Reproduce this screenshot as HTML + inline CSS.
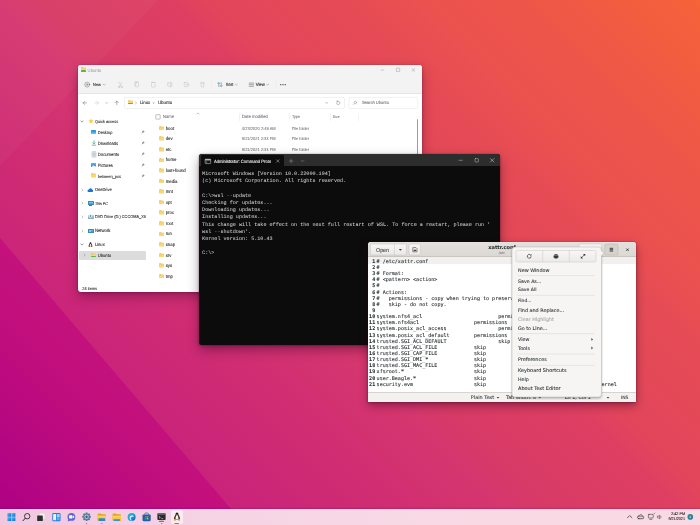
<!DOCTYPE html>
<html lang="en"><head><meta charset="utf-8"><title>Desktop</title>
<style>
html,body{margin:0;padding:0;background:#c9177a;}
body{width:700px;height:525px;overflow:hidden;}
#desk{position:relative;width:700px;height:525px;overflow:hidden;filter:blur(0.3px);
 background:linear-gradient(45deg,
  rgb(186,10,127) 0%,
  rgb(198,30,123) 12%,
  rgb(202,37,121) 22.9%,
  rgb(207,44,115) 31.9%,
  rgb(214,55,110) 42.9%,
  rgb(215,58,102) 46.2%,
  rgb(222,63,98) 56.7%,
  rgb(226,69,91) 59.8%,
  rgb(229,75,85) 70.9%,
  rgb(236,82,78) 78.1%,
  rgb(238,85,73) 85.2%,
  rgb(245,98,58) 98.9%,
  rgb(246,100,56) 100%);}
#desk div,#desk span,#desk svg{position:absolute;box-sizing:border-box;}
svg.tx{pointer-events:none;}
svg.tx text{white-space:pre;text-rendering:geometricPrecision;stroke-linejoin:round;}
.s{font-family:"Liberation Sans",sans-serif;}
.m{font-family:"Liberation Mono",monospace;}
.ds{font-family:"DejaVu Sans","Liberation Sans",sans-serif;}
.dm{font-family:"DejaVu Sans Mono","Liberation Mono",monospace;}

</style></head>
<body>
<div id="desk">
<svg width="700" height="525" viewBox="0 0 700 525" style="left:0;top:0"><defs><linearGradient id="g1" gradientUnits="userSpaceOnUse" x1="0" y1="525" x2="230" y2="295"><stop offset="0" stop-color="rgb(172,0,133)"/><stop offset="0.45" stop-color="rgb(193,14,125)"/><stop offset="1" stop-color="rgb(203,26,121)"/></linearGradient></defs><polygon points="0,238 232,510 232,525 0,525" fill="url(#g1)"/><polygon points="0,0 158,0 0,166" fill="#fff" opacity=".03"/></svg>
<div class="win" style="left:78.00px;top:65.00px;width:343.50px;height:227.00px;background:#fff;border-radius:3px;box-shadow:0 5px 12px rgba(50,0,40,.34),0 1px 3px rgba(50,0,40,.25),0 0 1px rgba(0,0,0,.35);overflow:hidden;"></div>
<div style="left:78.00px;top:65.00px;width:343.50px;height:29.00px;background:#f3f3f3;border-radius:3px 3px 0 0;border-bottom:0.5px solid #e5e5e5;"></div>
<svg width="5.60" height="4.48" viewBox="0 0 20 16" style="left:80.60px;top:67.40px"><path d="M1 2.2C1 1.5 1.5 1 2.2 1H7l2 2h8.8c.7 0 1.2.5 1.2 1.2V14c0 .6-.5 1-1.2 1H2.2C1.5 15 1 14.600 1 14Z" fill="#eab640"/><path d="M1 5.200C1 4.600 1.500 4.200 2.200 4.200H17.800C18.500 4.200 19 4.600 19 5.200V14c0 .6-.5 1-1.200 1H2.200C1.500 15 1 14.600 1 14Z" fill="#f8d874"/></svg>
<div style="left:81.2px;top:70.2px;width:4.4px;height:1.5px;background:#59b648;border-radius:.4px"></div>
<svg width="40" height="8" viewBox="0 0 40 8" style="left:378px;top:65.8px" fill="none" stroke="#989898" stroke-width=".48"><path d="M2.8 4H6.200"/><rect x="18.3" y="2.2" width="3.4" height="3.4" rx=".5"/><path d="M33.6 2.300l3.400 3.400M37 2.300l-3.400 3.400"/></svg>
<svg width="345" height="20" viewBox="78 74 345 20" style="left:78px;top:74px" fill="none" stroke-linecap="round"><circle cx="87.2" cy="84.6" r="2.500" stroke="#555" stroke-width=".4"/><path d="M87.2 83.400v2.400M86 84.600h2.400" stroke="#555" stroke-width=".4"/><path d="M103.2 84.200l1 1 1-1" stroke="#777" stroke-width=".45"/><g stroke="#c2c2c2" stroke-width=".5"><path d="M118.800 82l2.800 4.600M122 82l-2.800 4.600"/><circle cx="119" cy="87" r=".8"/><circle cx="121.800" cy="87" r=".8"/><rect x="135.600" y="82.600" width="3" height="4.200" rx=".5"/><path d="M134.800 86V82.400c0-.4.300-.7.700-.7h2.300"/><rect x="151.500" y="82.400" width="3.800" height="4.600" rx=".5"/><path d="M152.600 82.400h1.600"/><rect x="167.600" y="83" width="4.400" height="3.200" rx=".5"/><path d="M170.800 82v5.200"/><rect x="184.200" y="82.600" width="4" height="4" rx=".5"/><path d="M186.200 84.600h2.800"/><path d="M200.400 83h4M201 83l.3 4h2.200l.3-4M201.800 82.300h1.200"/></g><path d="M211.500 80.500v8" stroke="#e9e9e9" stroke-width=".4"/><g stroke="#3f7d9f" stroke-width=".55"><path d="M218.800 82.600v4M217.700 83.700l1.100-1.100 1.100 1.100M221.200 86.600v-4M220.100 85.500l1.100 1.100 1.100-1.100"/></g><path d="M235.400 84.200l1 1 1-1" stroke="#777" stroke-width=".45"/><g stroke="#9a9a9a" stroke-width=".9"><path d="M249.200 83.100h4.400M249.200 84.700h4.400M249.200 86.300h4.400"/></g><path d="M266.700 84.200l1 1 1-1" stroke="#777" stroke-width=".45"/><path d="M276 80.500v8" stroke="#e9e9e9" stroke-width=".4"/><g fill="#2e2e2e" stroke="none"><circle cx="280.800" cy="84.700" r=".6"/><circle cx="283" cy="84.700" r=".6"/><circle cx="285.200" cy="84.700" r=".6"/></g></svg>
<svg width="345" height="17" viewBox="78 94 345 17" style="left:78px;top:94px" fill="none" stroke-linecap="round" stroke-linejoin="round"><path d="M86.600 102.900h-3.600M84.600 101.300l-1.600 1.600 1.600 1.600" stroke="#6a6a6a" stroke-width=".5"/><path d="M94.900 102.900h3.600M96.900 101.300l1.600 1.600-1.600 1.600" stroke="#c4c4c4" stroke-width=".5"/><path d="M105.900 102.500l.9.900.9-.9" stroke="#777" stroke-width=".45"/><path d="M116.800 104.700v-3.600M115.200 102.700l1.600-1.600 1.600 1.600" stroke="#6a6a6a" stroke-width=".5"/><rect x="124.500" y="97.400" width="220" height="11.100" rx="1.200" fill="#fff" stroke="#e3e3e3" stroke-width=".5"/><path d="M135.600 102l.9.900-.9.900M153.300 102l.9.900-.9.900" stroke="#666" stroke-width=".45"/><path d="M325.900 102.600l.8.800.8-.8" stroke="#5a5a5a" stroke-width=".45"/><path d="M336.500 102.900a1.700 1.700 0 1 0 .5-1.200M337 100.700v1.100h1.100" stroke="#6e6e6e" stroke-width=".42"/><rect x="349" y="97.400" width="68.600" height="11.100" rx="1.200" fill="#fff" stroke="#e3e3e3" stroke-width=".5"/><circle cx="355.200" cy="102.500" r="1.300" stroke="#8a8a8a" stroke-width=".45"/><path d="M354.300 103.500l-1 1.100" stroke="#8a8a8a" stroke-width=".45"/></svg>
<svg width="5.40" height="4.32" viewBox="0 0 20 16" style="left:127.80px;top:100.40px"><path d="M1 2.2C1 1.5 1.5 1 2.2 1H7l2 2h8.8c.7 0 1.2.5 1.2 1.2V14c0 .6-.5 1-1.2 1H2.2C1.5 15 1 14.600 1 14Z" fill="#eab640"/><path d="M1 5.200C1 4.600 1.500 4.200 2.200 4.200H17.800C18.500 4.200 19 4.600 19 5.200V14c0 .6-.5 1-1.200 1H2.200C1.500 15 1 14.600 1 14Z" fill="#f8d874"/></svg>
<div style="left:128.400px;top:103.100px;width:4.200px;height:1.400px;background:#59b648;border-radius:.4px"></div>
<div style="left:79.00px;top:250.70px;width:67.00px;height:9.00px;background:#dcdcdc;border-radius:1px;"></div>
<svg width="4" height="3" viewBox="0 0 4 3" style="left:80.00px;top:119.80px" fill="none" stroke="#555" stroke-width=".6" stroke-linecap="round"><path d="M.800 .900l1.200 1.200 1.200-1.200"/></svg>
<svg width="6" height="6" viewBox="0 0 24 24" style="left:87.700px;top:118.300px"><path d="M12 2l3.100 6.500 7 .9-5.100 4.900 1.300 7L12 17.900 5.700 21.300l1.300-7L1.900 9.400l7-.9Z" fill="#f7c948"/></svg>
<div style="left:90.60px;top:129.90px;width:5.80px;height:4.40px;background:linear-gradient(#2f8fd6 0%,#38a5dd 62%,#7fd0ee 64%,#5bbbe6 100%);border-radius:.6px;"></div>
<svg width="4" height="4" viewBox="0 0 4 4" style="left:141.00px;top:130.10px" fill="#8a8a8a" stroke="#8a8a8a" stroke-width=".35"><path d="M2.300.600l1.100 1.100-.8.300-.7.900-.9-.9.900-.7Z"/><path d="M1.400 2.600l-.9.900" fill="none"/></svg>
<svg width="6" height="6" viewBox="0 0 6 6" style="left:90.500px;top:140.400px" fill="none" stroke="#2a9d8f" stroke-width=".65" stroke-linecap="round"><path d="M3 .800v3M1.800 2.700l1.200 1.200 1.200-1.200"/><path d="M1.200 5.200h3.600" stroke="#3f8f9f"/></svg>
<svg width="4" height="4" viewBox="0 0 4 4" style="left:141.00px;top:141.20px" fill="#8a8a8a" stroke="#8a8a8a" stroke-width=".35"><path d="M2.300.600l1.100 1.100-.8.300-.7.900-.9-.9.900-.7Z"/><path d="M1.400 2.600l-.9.900" fill="none"/></svg>
<svg width="6" height="7" viewBox="0 0 6 7" style="left:90.500px;top:150.700px"><rect x=".9" y=".6" width="4.200" height="5.600" rx=".5" fill="#e3e8ee" stroke="#a3afbc" stroke-width=".4"/><path d="M1.700 2.200h2.600M1.700 3.300h2.600M1.700 4.400h2.600" stroke="#7d9cc0" stroke-width=".4"/></svg>
<svg width="4" height="4" viewBox="0 0 4 4" style="left:141.00px;top:152.00px" fill="#8a8a8a" stroke="#8a8a8a" stroke-width=".35"><path d="M2.300.600l1.100 1.100-.8.300-.7.900-.9-.9.900-.7Z"/><path d="M1.400 2.600l-.9.900" fill="none"/></svg>
<div style="left:90.60px;top:162.70px;width:5.80px;height:4.60px;background:linear-gradient(#5cb4f0,#2b7fd0);border-radius:.6px;"></div>
<svg width="5.800" height="4.600" viewBox="0 0 58 46" style="left:90.600px;top:162.700px"><path d="M6 40l16-20 10 12 8-8 12 16Z" fill="#dff0ff"/></svg>
<svg width="4" height="4" viewBox="0 0 4 4" style="left:141.00px;top:163.00px" fill="#8a8a8a" stroke="#8a8a8a" stroke-width=".35"><path d="M2.300.600l1.100 1.100-.8.300-.7.900-.9-.9.900-.7Z"/><path d="M1.400 2.600l-.9.900" fill="none"/></svg>
<svg width="5.60" height="4.48" viewBox="0 0 20 16" style="left:90.60px;top:173.40px"><path d="M1 2.2C1 1.5 1.5 1 2.2 1H7l2 2h8.8c.7 0 1.2.5 1.2 1.2V14c0 .6-.5 1-1.2 1H2.2C1.5 15 1 14.600 1 14Z" fill="#eab640"/><path d="M1 5.200C1 4.600 1.500 4.200 2.200 4.200H17.800C18.500 4.200 19 4.600 19 5.200V14c0 .6-.5 1-1.200 1H2.200C1.500 15 1 14.600 1 14Z" fill="#f8d874"/></svg>
<svg width="4" height="4" viewBox="0 0 4 4" style="left:141.00px;top:173.70px" fill="#8a8a8a" stroke="#8a8a8a" stroke-width=".35"><path d="M2.300.600l1.100 1.100-.8.300-.7.900-.9-.9.900-.7Z"/><path d="M1.400 2.600l-.9.900" fill="none"/></svg>
<svg width="3" height="4" viewBox="0 0 3 4" style="left:80.80px;top:187.80px" fill="none" stroke="#8a8a8a" stroke-width=".5" stroke-linecap="round"><path d="M1 .900l1.100 1.100-1.100 1.100"/></svg>
<svg width="6.400" height="4.200" viewBox="0 0 32 21" style="left:87.400px;top:187.700px"><path d="M8 20h17a6 6 0 0 0 1-11.900A8 8 0 0 0 11 6a6 6 0 0 0-5 2.500A6 6 0 0 0 8 20Z" fill="#1876d2"/></svg>
<svg width="3" height="4" viewBox="0 0 3 4" style="left:80.80px;top:201.20px" fill="none" stroke="#8a8a8a" stroke-width=".5" stroke-linecap="round"><path d="M1 .900l1.100 1.100-1.100 1.100"/></svg>
<div style="left:87.60px;top:200.90px;width:6.00px;height:4.20px;background:linear-gradient(#7fcdf0,#3fa2da);border-radius:.5px;border:.35px solid #3f86b3;"></div>
<div style="left:89.20px;top:205.10px;width:2.80px;height:0.50px;background:#5b6b78;"></div>
<svg width="3" height="4" viewBox="0 0 3 4" style="left:80.80px;top:215.00px" fill="none" stroke="#8a8a8a" stroke-width=".5" stroke-linecap="round"><path d="M1 .900l1.100 1.100-1.100 1.100"/></svg>
<div style="left:87.60px;top:215.20px;width:6.00px;height:3.60px;background:linear-gradient(#c9d3da,#8fa1ad);border-radius:.6px;"></div>
<div style="left:89.100px;top:214.400px;width:3.400px;height:3.400px;border-radius:50%;background:#39b0c7;border:.4px solid #e9f4f7"></div>
<svg width="3" height="4" viewBox="0 0 3 4" style="left:80.80px;top:228.70px" fill="none" stroke="#8a8a8a" stroke-width=".5" stroke-linecap="round"><path d="M1 .900l1.100 1.100-1.100 1.100"/></svg>
<div style="left:87.60px;top:228.50px;width:6.00px;height:4.20px;background:linear-gradient(#6fc1ee,#3292d6);border-radius:.5px;border:.35px solid #3f86b3;"></div>
<div style="left:88.600px;top:229.500px;width:2.600px;height:2.600px;border-radius:50%;background:#8fd3f7"></div>
<svg width="4" height="3" viewBox="0 0 4 3" style="left:80.30px;top:243.10px" fill="none" stroke="#555" stroke-width=".6" stroke-linecap="round"><path d="M.800 .900l1.200 1.200 1.200-1.200"/></svg>
<svg width="5.00" height="5.75" viewBox="0 0 20 23" style="left:88.20px;top:241.60px"><path d="M10 1c-2.200 0-3.400 1.800-3.400 4 0 2-1.200 3.600-2.600 6.200C2.600 14 2.400 17 3.400 19.500h13.200c1-2.500.8-5.500-.6-8.300C14.600 8.600 13.400 7 13.400 5c0-2.200-1.200-4-3.400-4Z" fill="#1c1c1c"/><path d="M10 7.500c-1.600 0-2.600 2.600-3.400 5.200-.7 2.400-.5 4.700.4 6.300h6c.9-1.600 1.100-3.900.4-6.300C12.600 10.100 11.600 7.500 10 7.500Z" fill="#f4f4f4"/><path d="M8.200 5.800l1.800 1.400 1.800-1.400-1.800-.8Z" fill="#f5a623"/><path d="M2 19.500c0-1.400 1.400-2.400 3.200-2 1.600.4 2.600 1.600 2.600 2.800C7.800 21.600 6 22 4.400 22 2.800 22 2 20.900 2 19.500ZM18 19.500c0-1.400-1.400-2.400-3.200-2-1.600.4-2.600 1.600-2.600 2.800 0 1.300 1.800 1.700 3.400 1.700 1.600 0 2.400-1.100 2.400-2.500Z" fill="#f5a623"/></svg>
<svg width="3" height="4" viewBox="0 0 3 4" style="left:83.40px;top:253.10px" fill="none" stroke="#8a8a8a" stroke-width=".5" stroke-linecap="round"><path d="M1 .900l1.100 1.100-1.100 1.100"/></svg>
<svg width="5.60" height="4.48" viewBox="0 0 20 16" style="left:90.60px;top:252.80px"><path d="M1 2.2C1 1.5 1.5 1 2.2 1H7l2 2h8.8c.7 0 1.2.5 1.2 1.2V14c0 .6-.5 1-1.2 1H2.2C1.5 15 1 14.600 1 14Z" fill="#eab640"/><path d="M1 5.200C1 4.600 1.500 4.200 2.200 4.200H17.800C18.500 4.200 19 4.600 19 5.200V14c0 .6-.5 1-1.200 1H2.200C1.500 15 1 14.600 1 14Z" fill="#f8d874"/></svg>
<div style="left:91.200px;top:255.600px;width:4.400px;height:1.500px;background:#59b648;border-radius:.4px"></div>
<svg width="6" height="6" viewBox="0 0 6 6" style="left:154.700px;top:113.700px"><rect x=".8" y=".7" width="4.400" height="4.400" rx=".35" fill="#fff" stroke="#858585" stroke-width=".5"/></svg>
<svg width="4" height="3" viewBox="0 0 4 3" style="left:195.800px;top:111.700px" fill="none" stroke="#8a8a8a" stroke-width=".5"><path d="M.600 2.300l1.400-1.400 1.400 1.400"/></svg>
<div style="left:239.20px;top:112.50px;width:0.50px;height:8.00px;background:#f2f2f2;"></div>
<div style="left:289.00px;top:112.50px;width:0.50px;height:8.00px;background:#f2f2f2;"></div>
<div style="left:329.70px;top:112.50px;width:0.50px;height:8.00px;background:#f2f2f2;"></div>
<div style="left:357.50px;top:112.50px;width:0.50px;height:8.00px;background:#f2f2f2;"></div>
<div style="left:416.90px;top:119.00px;width:0.90px;height:60.00px;background:#9c9c9c;border-radius:.5px;"></div>
<svg width="5.70" height="4.56" viewBox="0 0 20 16" style="left:158.70px;top:125.85px"><path d="M1 2.2C1 1.5 1.5 1 2.2 1H7l2 2h8.8c.7 0 1.2.5 1.2 1.2V14c0 .6-.5 1-1.2 1H2.2C1.5 15 1 14.600 1 14Z" fill="#eab640"/><path d="M1 5.200C1 4.600 1.500 4.200 2.200 4.200H17.800C18.500 4.200 19 4.600 19 5.200V14c0 .6-.5 1-1.200 1H2.200C1.500 15 1 14.600 1 14Z" fill="#f8d874"/></svg>
<svg width="5.70" height="4.56" viewBox="0 0 20 16" style="left:158.70px;top:136.42px"><path d="M1 2.2C1 1.5 1.5 1 2.2 1H7l2 2h8.8c.7 0 1.2.5 1.2 1.2V14c0 .6-.5 1-1.2 1H2.2C1.5 15 1 14.600 1 14Z" fill="#eab640"/><path d="M1 5.200C1 4.600 1.500 4.200 2.200 4.200H17.800C18.500 4.200 19 4.600 19 5.200V14c0 .6-.5 1-1.200 1H2.200C1.500 15 1 14.600 1 14Z" fill="#f8d874"/></svg>
<svg width="5.70" height="4.56" viewBox="0 0 20 16" style="left:158.70px;top:146.99px"><path d="M1 2.2C1 1.5 1.5 1 2.2 1H7l2 2h8.8c.7 0 1.2.5 1.2 1.2V14c0 .6-.5 1-1.2 1H2.2C1.5 15 1 14.600 1 14Z" fill="#eab640"/><path d="M1 5.200C1 4.600 1.500 4.200 2.200 4.200H17.800C18.500 4.200 19 4.600 19 5.200V14c0 .6-.5 1-1.200 1H2.200C1.500 15 1 14.600 1 14Z" fill="#f8d874"/></svg>
<svg width="5.70" height="4.56" viewBox="0 0 20 16" style="left:158.70px;top:157.56px"><path d="M1 2.2C1 1.5 1.5 1 2.2 1H7l2 2h8.8c.7 0 1.2.5 1.2 1.2V14c0 .6-.5 1-1.2 1H2.2C1.5 15 1 14.600 1 14Z" fill="#eab640"/><path d="M1 5.200C1 4.600 1.500 4.200 2.200 4.200H17.800C18.500 4.200 19 4.600 19 5.200V14c0 .6-.5 1-1.200 1H2.200C1.500 15 1 14.600 1 14Z" fill="#f8d874"/></svg>
<svg width="5.70" height="4.56" viewBox="0 0 20 16" style="left:158.70px;top:168.13px"><path d="M1 2.2C1 1.5 1.5 1 2.2 1H7l2 2h8.8c.7 0 1.2.5 1.2 1.2V14c0 .6-.5 1-1.2 1H2.2C1.5 15 1 14.600 1 14Z" fill="#eab640"/><path d="M1 5.200C1 4.600 1.500 4.200 2.200 4.200H17.800C18.500 4.200 19 4.600 19 5.200V14c0 .6-.5 1-1.200 1H2.200C1.500 15 1 14.600 1 14Z" fill="#f8d874"/></svg>
<svg width="5.70" height="4.56" viewBox="0 0 20 16" style="left:158.70px;top:178.70px"><path d="M1 2.2C1 1.5 1.5 1 2.2 1H7l2 2h8.8c.7 0 1.2.5 1.2 1.2V14c0 .6-.5 1-1.2 1H2.2C1.5 15 1 14.600 1 14Z" fill="#eab640"/><path d="M1 5.200C1 4.600 1.500 4.200 2.200 4.200H17.800C18.500 4.200 19 4.600 19 5.200V14c0 .6-.5 1-1.200 1H2.200C1.500 15 1 14.600 1 14Z" fill="#f8d874"/></svg>
<svg width="5.70" height="4.56" viewBox="0 0 20 16" style="left:158.70px;top:189.27px"><path d="M1 2.2C1 1.5 1.5 1 2.2 1H7l2 2h8.8c.7 0 1.2.5 1.2 1.2V14c0 .6-.5 1-1.2 1H2.2C1.5 15 1 14.600 1 14Z" fill="#eab640"/><path d="M1 5.200C1 4.600 1.500 4.200 2.200 4.200H17.800C18.500 4.200 19 4.600 19 5.200V14c0 .6-.5 1-1.200 1H2.200C1.500 15 1 14.600 1 14Z" fill="#f8d874"/></svg>
<svg width="5.70" height="4.56" viewBox="0 0 20 16" style="left:158.70px;top:199.84px"><path d="M1 2.2C1 1.5 1.5 1 2.2 1H7l2 2h8.8c.7 0 1.2.5 1.2 1.2V14c0 .6-.5 1-1.2 1H2.2C1.5 15 1 14.600 1 14Z" fill="#eab640"/><path d="M1 5.200C1 4.600 1.500 4.200 2.200 4.200H17.800C18.500 4.200 19 4.600 19 5.200V14c0 .6-.5 1-1.200 1H2.200C1.500 15 1 14.600 1 14Z" fill="#f8d874"/></svg>
<svg width="5.70" height="4.56" viewBox="0 0 20 16" style="left:158.70px;top:210.41px"><path d="M1 2.2C1 1.5 1.5 1 2.2 1H7l2 2h8.8c.7 0 1.2.5 1.2 1.2V14c0 .6-.5 1-1.2 1H2.2C1.5 15 1 14.600 1 14Z" fill="#eab640"/><path d="M1 5.200C1 4.600 1.500 4.200 2.200 4.200H17.800C18.500 4.200 19 4.600 19 5.200V14c0 .6-.5 1-1.200 1H2.200C1.500 15 1 14.600 1 14Z" fill="#f8d874"/></svg>
<svg width="5.70" height="4.56" viewBox="0 0 20 16" style="left:158.70px;top:220.98px"><path d="M1 2.2C1 1.5 1.5 1 2.2 1H7l2 2h8.8c.7 0 1.2.5 1.2 1.2V14c0 .6-.5 1-1.2 1H2.2C1.5 15 1 14.600 1 14Z" fill="#eab640"/><path d="M1 5.200C1 4.600 1.500 4.200 2.200 4.200H17.800C18.500 4.200 19 4.600 19 5.200V14c0 .6-.5 1-1.200 1H2.200C1.500 15 1 14.600 1 14Z" fill="#f8d874"/></svg>
<svg width="5.70" height="4.56" viewBox="0 0 20 16" style="left:158.70px;top:231.55px"><path d="M1 2.2C1 1.5 1.5 1 2.2 1H7l2 2h8.8c.7 0 1.2.5 1.2 1.2V14c0 .6-.5 1-1.2 1H2.2C1.5 15 1 14.600 1 14Z" fill="#eab640"/><path d="M1 5.200C1 4.600 1.500 4.200 2.200 4.200H17.800C18.500 4.200 19 4.600 19 5.200V14c0 .6-.5 1-1.200 1H2.200C1.500 15 1 14.600 1 14Z" fill="#f8d874"/></svg>
<svg width="5.70" height="4.56" viewBox="0 0 20 16" style="left:158.70px;top:242.12px"><path d="M1 2.2C1 1.5 1.5 1 2.2 1H7l2 2h8.8c.7 0 1.2.5 1.2 1.2V14c0 .6-.5 1-1.2 1H2.2C1.5 15 1 14.600 1 14Z" fill="#eab640"/><path d="M1 5.200C1 4.600 1.500 4.200 2.200 4.200H17.800C18.500 4.200 19 4.600 19 5.200V14c0 .6-.5 1-1.200 1H2.200C1.500 15 1 14.600 1 14Z" fill="#f8d874"/></svg>
<svg width="5.70" height="4.56" viewBox="0 0 20 16" style="left:158.70px;top:252.69px"><path d="M1 2.2C1 1.5 1.5 1 2.2 1H7l2 2h8.8c.7 0 1.2.5 1.2 1.2V14c0 .6-.5 1-1.2 1H2.2C1.5 15 1 14.600 1 14Z" fill="#eab640"/><path d="M1 5.200C1 4.600 1.500 4.200 2.200 4.200H17.800C18.500 4.200 19 4.600 19 5.200V14c0 .6-.5 1-1.200 1H2.200C1.500 15 1 14.600 1 14Z" fill="#f8d874"/></svg>
<svg width="5.70" height="4.56" viewBox="0 0 20 16" style="left:158.70px;top:263.26px"><path d="M1 2.2C1 1.5 1.5 1 2.2 1H7l2 2h8.8c.7 0 1.2.5 1.2 1.2V14c0 .6-.5 1-1.2 1H2.2C1.5 15 1 14.600 1 14Z" fill="#eab640"/><path d="M1 5.200C1 4.600 1.500 4.200 2.200 4.200H17.800C18.500 4.200 19 4.600 19 5.200V14c0 .6-.5 1-1.200 1H2.200C1.500 15 1 14.600 1 14Z" fill="#f8d874"/></svg>
<svg width="5.70" height="4.56" viewBox="0 0 20 16" style="left:158.70px;top:273.83px"><path d="M1 2.2C1 1.5 1.5 1 2.2 1H7l2 2h8.8c.7 0 1.2.5 1.2 1.2V14c0 .6-.5 1-1.2 1H2.2C1.5 15 1 14.600 1 14Z" fill="#eab640"/><path d="M1 5.200C1 4.600 1.500 4.200 2.200 4.200H17.800C18.500 4.200 19 4.600 19 5.200V14c0 .6-.5 1-1.200 1H2.200C1.500 15 1 14.600 1 14Z" fill="#f8d874"/></svg>
<svg width="5.70" height="4.56" viewBox="0 0 20 16" style="left:158.70px;top:284.40px"><path d="M1 2.2C1 1.5 1.5 1 2.2 1H7l2 2h8.8c.7 0 1.2.5 1.2 1.2V14c0 .6-.5 1-1.2 1H2.2C1.5 15 1 14.600 1 14Z" fill="#eab640"/><path d="M1 5.200C1 4.600 1.500 4.200 2.200 4.200H17.800C18.500 4.200 19 4.600 19 5.200V14c0 .6-.5 1-1.200 1H2.200C1.500 15 1 14.600 1 14Z" fill="#f8d874"/></svg>
<svg class="tx" xml:space="preserve" width="700" height="525" viewBox="0 0 700 525" style="left:0;top:0">
<text class="s" x="87.60" y="72" font-size="4.597" fill="#9c9c9c" textLength="13.60" lengthAdjust="spacingAndGlyphs" stroke="#9c9c9c" stroke-width="0.03">Ubuntu</text>
<text class="s" x="93.10" y="86" font-size="4.250" fill="#2a2a2a" textLength="7.80" lengthAdjust="spacingAndGlyphs" stroke="#2a2a2a" stroke-width="0.1">New</text>
<text class="s" x="225.80" y="86" font-size="4.457" fill="#2a2a2a" textLength="7.50" lengthAdjust="spacingAndGlyphs" stroke="#2a2a2a" stroke-width="0.1">Sort</text>
<text class="s" x="255.70" y="86" font-size="4.564" fill="#2a2a2a" textLength="9.00" lengthAdjust="spacingAndGlyphs" stroke="#2a2a2a" stroke-width="0.1">View</text>
<text class="s" x="139.90" y="104" font-size="4.696" fill="#2a2a2a" textLength="10.30" lengthAdjust="spacingAndGlyphs" stroke="#2a2a2a" stroke-width="0.1">Linux</text>
<text class="s" x="157.90" y="104" font-size="4.800" fill="#2a2a2a" textLength="14.20" lengthAdjust="spacingAndGlyphs" stroke="#2a2a2a" stroke-width="0.1">Ubuntu</text>
<text class="s" x="361.90" y="104" font-size="4.412" fill="#7a7a7a" textLength="27.00" lengthAdjust="spacingAndGlyphs" stroke="#7a7a7a" stroke-width="0.1">Search Ubuntu</text>
<text class="s" x="94.90" y="123" font-size="4.253" fill="#2e2e2e" textLength="23.20" lengthAdjust="spacingAndGlyphs" stroke="#2e2e2e" stroke-width="0.1">Quick access</text>
<text class="s" x="97.80" y="134" font-size="4.338" fill="#2e2e2e" textLength="14.60" lengthAdjust="spacingAndGlyphs" stroke="#2e2e2e" stroke-width="0.1">Desktop</text>
<text class="s" x="97.80" y="145" font-size="4.473" fill="#2e2e2e" textLength="20.30" lengthAdjust="spacingAndGlyphs" stroke="#2e2e2e" stroke-width="0.1">Downloads</text>
<text class="s" x="97.80" y="156" font-size="4.569" fill="#2e2e2e" textLength="21.20" lengthAdjust="spacingAndGlyphs" stroke="#2e2e2e" stroke-width="0.1">Documents</text>
<text class="s" x="97.80" y="167" font-size="4.526" fill="#2e2e2e" textLength="15.00" lengthAdjust="spacingAndGlyphs" stroke="#2e2e2e" stroke-width="0.1">Pictures</text>
<text class="s" x="97.80" y="178" font-size="4.273" fill="#2e2e2e" textLength="23.10" lengthAdjust="spacingAndGlyphs" stroke="#2e2e2e" stroke-width="0.1">between_pcs</text>
<text class="s" x="94.90" y="191" font-size="4.336" fill="#2e2e2e" textLength="16.80" lengthAdjust="spacingAndGlyphs" stroke="#2e2e2e" stroke-width="0.1">OneDrive</text>
<text class="s" x="94.90" y="205" font-size="4.015" fill="#2e2e2e" textLength="13.10" lengthAdjust="spacingAndGlyphs" stroke="#2e2e2e" stroke-width="0.1">This PC</text>
<text class="s" x="94.90" y="218" font-size="4.222" fill="#2e2e2e" textLength="51.00" lengthAdjust="spacingAndGlyphs" stroke="#2e2e2e" stroke-width="0.1">DVD Drive (D:) CCCOMA_X6</text>
<text class="s" x="94.90" y="232" font-size="4.607" fill="#2e2e2e" textLength="15.50" lengthAdjust="spacingAndGlyphs" stroke="#2e2e2e" stroke-width="0.1">Network</text>
<text class="s" x="94.90" y="246" font-size="4.468" fill="#2e2e2e" textLength="9.80" lengthAdjust="spacingAndGlyphs" stroke="#2e2e2e" stroke-width="0.1">Linux</text>
<text class="s" x="97.80" y="257" font-size="4.496" fill="#2e2e2e" textLength="13.30" lengthAdjust="spacingAndGlyphs" stroke="#2e2e2e" stroke-width="0.1">Ubuntu</text>
<text class="s" x="82.30" y="290" font-size="4.240" fill="#333" textLength="14.70" lengthAdjust="spacingAndGlyphs" stroke="#333" stroke-width="0.1">24 items</text>
<text class="s" x="163.10" y="118" font-size="4.495" fill="#5f6876" textLength="11.00" lengthAdjust="spacingAndGlyphs" stroke="#5f6876" stroke-width="0.04">Name</text>
<text class="s" x="241.80" y="118" font-size="4.629" fill="#5f6876" textLength="26.20" lengthAdjust="spacingAndGlyphs" stroke="#5f6876" stroke-width="0.04">Date modified</text>
<text class="s" x="291.90" y="118" font-size="4.072" fill="#5f6876" textLength="8.10" lengthAdjust="spacingAndGlyphs" stroke="#5f6876" stroke-width="0.04">Type</text>
<text class="s" x="332.80" y="118" font-size="3.810" fill="#5f6876" textLength="6.80" lengthAdjust="spacingAndGlyphs" stroke="#5f6876" stroke-width="0.04">Size</text>
<text class="s" x="165.70" y="130" font-size="4.704" fill="#2a2a2a" textLength="8.40" lengthAdjust="spacingAndGlyphs" stroke="#2a2a2a" stroke-width="0.1">boot</text>
<text class="s" x="241.80" y="130" font-size="4.401" fill="#707070" textLength="33.90" lengthAdjust="spacingAndGlyphs" stroke="#707070" stroke-width="0.05">4/23/2020 2:49 AM</text>
<text class="s" x="291.90" y="130" font-size="4.270" fill="#707070" textLength="17.20" lengthAdjust="spacingAndGlyphs" stroke="#707070" stroke-width="0.05">File folder</text>
<text class="s" x="165.70" y="140" font-size="4.704" fill="#2a2a2a" textLength="6.96" lengthAdjust="spacingAndGlyphs" stroke="#2a2a2a" stroke-width="0.1">dev</text>
<text class="s" x="241.80" y="140" font-size="4.373" fill="#707070" textLength="33.90" lengthAdjust="spacingAndGlyphs" stroke="#707070" stroke-width="0.05">9/21/2021 2:33 PM</text>
<text class="s" x="291.90" y="140" font-size="4.270" fill="#707070" textLength="17.20" lengthAdjust="spacingAndGlyphs" stroke="#707070" stroke-width="0.05">File folder</text>
<text class="s" x="165.70" y="151" font-size="4.704" fill="#2a2a2a" textLength="5.76" lengthAdjust="spacingAndGlyphs" stroke="#2a2a2a" stroke-width="0.1">etc</text>
<text class="s" x="241.80" y="151" font-size="4.373" fill="#707070" textLength="33.90" lengthAdjust="spacingAndGlyphs" stroke="#707070" stroke-width="0.05">9/21/2021 2:33 PM</text>
<text class="s" x="291.90" y="151" font-size="4.270" fill="#707070" textLength="17.20" lengthAdjust="spacingAndGlyphs" stroke="#707070" stroke-width="0.05">File folder</text>
<text class="s" x="165.70" y="161" font-size="4.704" fill="#2a2a2a" textLength="10.80" lengthAdjust="spacingAndGlyphs" stroke="#2a2a2a" stroke-width="0.1">home</text>
<text class="s" x="165.70" y="172" font-size="4.704" fill="#2a2a2a" textLength="20.04" lengthAdjust="spacingAndGlyphs" stroke="#2a2a2a" stroke-width="0.1">lost+found</text>
<text class="s" x="165.70" y="183" font-size="4.704" fill="#2a2a2a" textLength="11.75" lengthAdjust="spacingAndGlyphs" stroke="#2a2a2a" stroke-width="0.1">media</text>
<text class="s" x="165.70" y="193" font-size="4.704" fill="#2a2a2a" textLength="7.19" lengthAdjust="spacingAndGlyphs" stroke="#2a2a2a" stroke-width="0.1">mnt</text>
<text class="s" x="165.70" y="204" font-size="4.704" fill="#2a2a2a" textLength="6.00" lengthAdjust="spacingAndGlyphs" stroke="#2a2a2a" stroke-width="0.1">opt</text>
<text class="s" x="165.70" y="214" font-size="4.704" fill="#2a2a2a" textLength="8.40" lengthAdjust="spacingAndGlyphs" stroke="#2a2a2a" stroke-width="0.1">proc</text>
<text class="s" x="165.70" y="225" font-size="4.704" fill="#2a2a2a" textLength="7.44" lengthAdjust="spacingAndGlyphs" stroke="#2a2a2a" stroke-width="0.1">root</text>
<text class="s" x="165.70" y="235" font-size="4.704" fill="#2a2a2a" textLength="6.24" lengthAdjust="spacingAndGlyphs" stroke="#2a2a2a" stroke-width="0.1">run</text>
<text class="s" x="165.70" y="246" font-size="4.704" fill="#2a2a2a" textLength="9.36" lengthAdjust="spacingAndGlyphs" stroke="#2a2a2a" stroke-width="0.1">snap</text>
<text class="s" x="165.70" y="257" font-size="4.704" fill="#2a2a2a" textLength="5.75" lengthAdjust="spacingAndGlyphs" stroke="#2a2a2a" stroke-width="0.1">srv</text>
<text class="s" x="165.70" y="267" font-size="4.704" fill="#2a2a2a" textLength="6.47" lengthAdjust="spacingAndGlyphs" stroke="#2a2a2a" stroke-width="0.1">sys</text>
<text class="s" x="165.70" y="278" font-size="4.704" fill="#2a2a2a" textLength="7.19" lengthAdjust="spacingAndGlyphs" stroke="#2a2a2a" stroke-width="0.1">tmp</text>
</svg>
<div style="left:150.00px;top:283.80px;width:268.00px;height:8.20px;background:#fff;"></div>
<div style="left:199.00px;top:154.00px;width:301.00px;height:191.00px;background:#0c0c0c;border-radius:3px;box-shadow:0 5px 12px rgba(40,0,30,.4),0 1px 3px rgba(40,0,30,.3),0 0 1px rgba(0,0,0,.6);"></div>
<div style="left:199.00px;top:154.00px;width:301.00px;height:12.30px;background:#2d2d2d;border-radius:3px 3px 0 0;"></div>
<div style="left:201.20px;top:155.30px;width:82.40px;height:11.10px;background:#0c0c0c;border-radius:1.5px 1.5px 0 0;"></div>
<svg width="8" height="7" viewBox="0 0 8 7" style="left:204px;top:157.600px"><rect x="1.100" y="1.200" width="5.600" height="4.400" rx=".5" fill="#141414" stroke="#c8c8c8" stroke-width=".55"/><rect x="1.100" y="1.200" width="5.600" height="1.200" fill="#c8c8c8"/><path d="M2.200 3.400l.9.700-.9.700" fill="none" stroke="#ddd" stroke-width=".4"/></svg>
<svg width="301" height="12" viewBox="199 154 301 12" style="left:199px;top:154px" fill="none" stroke="#d0d0d0" stroke-width=".5" stroke-linecap="round"><path d="M276.600 159.800l2.400 2.400M279 159.800l-2.400 2.400"/><path d="M291.100 159.200v3.600M289.300 161h3.600" stroke="#9a9a9a"/><path d="M301.300 160.400l1.300 1.300 1.300-1.300" stroke="#9a9a9a"/><path d="M459 160.300h3.400" stroke="#bdbdbd"/><rect x="475" y="158.600" width="3.400" height="3.400" rx=".5" stroke="#bdbdbd"/><path d="M490.500 158.600l3.400 3.400M493.900 158.600l-3.400 3.400" stroke="#e0e0e0"/></svg>
<svg class="tx" xml:space="preserve" width="700" height="525" viewBox="0 0 700 525" style="left:0;top:0">
<text class="s" x="214.00" y="163" font-size="4.542" fill="#f2f2f2" textLength="57.20" lengthAdjust="spacingAndGlyphs" stroke="#f2f2f2" stroke-width="0.1">Administrator: Command Prom</text>
<text class="m" x="202.10" y="175" font-size="5.115" fill="#cccccc" stroke="#cccccc" stroke-width="0.05">Microsoft Windows [Version 10.0.22000.194]</text>
<text class="m" x="202.10" y="182" font-size="5.115" fill="#cccccc" stroke="#cccccc" stroke-width="0.05">(c) Microsoft Corporation. All rights reserved.</text>
<text class="m" x="202.10" y="197" font-size="5.115" fill="#cccccc" stroke="#cccccc" stroke-width="0.05">C:\&gt;wsl --update</text>
<text class="m" x="202.10" y="204" font-size="5.115" fill="#cccccc" stroke="#cccccc" stroke-width="0.05">Checking for updates...</text>
<text class="m" x="202.10" y="211" font-size="5.115" fill="#cccccc" stroke="#cccccc" stroke-width="0.05">Downloading updates...</text>
<text class="m" x="202.10" y="218" font-size="5.115" fill="#cccccc" stroke="#cccccc" stroke-width="0.05">Installing updates...</text>
<text class="m" x="202.10" y="226" font-size="5.115" fill="#cccccc" stroke="#cccccc" stroke-width="0.05">This change will take effect on the next full restart of WSL. To force a restart, please run &#x27;</text>
<text class="m" x="202.10" y="233" font-size="5.115" fill="#cccccc" stroke="#cccccc" stroke-width="0.05">wsl --shutdown&#x27;.</text>
<text class="m" x="202.10" y="240" font-size="5.115" fill="#cccccc" stroke="#cccccc" stroke-width="0.05">Kernel version: 5.10.43</text>
<text class="m" x="202.10" y="254" font-size="5.115" fill="#cccccc" stroke="#cccccc" stroke-width="0.05">C:\&gt;</text>
</svg>
<div style="left:368.00px;top:242.00px;width:268.00px;height:160.00px;background:#fff;border-radius:3px 3px 0 0;box-shadow:0 4px 10px rgba(50,0,30,.4),0 1px 3px rgba(50,0,30,.3),0 0 1px rgba(0,0,0,.5);"></div>
<div style="left:368.00px;top:242.00px;width:268.00px;height:14.80px;background:linear-gradient(#e4e1de,#dbd8d4);border-radius:3px 3px 0 0;"></div>
<div style="left:368.00px;top:256.40px;width:268.00px;height:0.60px;background:#c9c4be;"></div>
<svg width="268" height="14" viewBox="368 242 268 14" style="left:368px;top:242px"><defs><linearGradient id="gb" x1="0" y1="0" x2="0" y2="1"><stop offset="0" stop-color="#f7f6f5"/><stop offset="1" stop-color="#ebe9e7"/></linearGradient></defs><rect x="370.400" y="244" width="36" height="11" rx="1.300" fill="url(#gb)" stroke="#c6c0ba" stroke-width=".5"/><path d="M394.400 244v11" stroke="#c6c0ba" stroke-width=".5"/><path d="M398.800 249l1.600 1.700 1.600-1.700Z" fill="#3d4245"/><rect x="409" y="244" width="11.600" height="11" rx="1.300" fill="url(#gb)" stroke="#c6c0ba" stroke-width=".5"/><path d="M412.800 247.600h3.200l1 1v3.200h-4.200Z" fill="none" stroke="#3d4245" stroke-width=".6"/><rect x="413.700" y="249.700" width="2.400" height="1.300" fill="#3d4245"/><rect x="579" y="244" width="22.500" height="11" rx="1.300" fill="url(#gb)" stroke="#c6c0ba" stroke-width=".5"/><rect x="604.800" y="244" width="13.200" height="11" rx="1.300" fill="#d6d2cd" stroke="#b9b3ac" stroke-width=".5"/><path d="M609.700 248.300h3.400M609.700 249.700h3.400M609.700 251.100h3.400" stroke="#2e3436" stroke-width=".9"/><path d="M626.400 248.600l2.200 2.200M628.600 248.600l-2.200 2.200" stroke="#2e3436" stroke-width=".95"/></svg>
<div style="left:368.00px;top:257.00px;width:268.00px;height:135.00px;background:#fff;"></div>
<div style="left:368.00px;top:257.20px;width:268.00px;height:6.80px;background:#f0f0f0;"></div>
<div style="left:368.00px;top:392.00px;width:268.00px;height:10.00px;background:#f3f2f0;"></div>
<div style="left:368.00px;top:391.80px;width:268.00px;height:0.50px;background:#d8d3ce;"></div>
<svg width="268" height="10" viewBox="368 392 268 10" style="left:368px;top:392px" fill="#3d4245"><path d="M496.600 397l1.400 1.500 1.400-1.500ZM538.400 397l1.400 1.500 1.400-1.500ZM606.600 397l1.400 1.500 1.400-1.500Z"/></svg>
<svg class="tx" xml:space="preserve" width="700" height="525" viewBox="0 0 700 525" style="left:0;top:0">
<text class="s" x="376.00" y="252" font-size="5.792" fill="#3d4245" textLength="13.00" lengthAdjust="spacingAndGlyphs" stroke="#3d4245" stroke-width="0.1">Open</text>
<text class="ds" x="502.00" y="249" font-size="5.062" fill="#2e3436" font-weight="700" text-anchor="middle" stroke="#2e3436" stroke-width="0.1">xattr.conf</text>
<text class="ds" x="502.00" y="254" font-size="3.485" fill="#8b8e8f" text-anchor="middle" stroke="#8b8e8f" stroke-width="0.1">/etc</text>
<text class="dm" x="375.20" y="263" font-size="5.100" fill="#2e3436" font-weight="700" text-anchor="end" textLength="3.04" lengthAdjust="spacingAndGlyphs" stroke="#2e3436" stroke-width="0.1">1</text>
<text class="dm" x="376.60" y="263" font-size="5.100" fill="#2a2f31" textLength="51.68" lengthAdjust="spacingAndGlyphs" stroke="#2a2f31" stroke-width="0.1"># /etc/xattr.conf</text>
<text class="dm" x="375.20" y="269" font-size="5.100" fill="#2e3436" font-weight="700" text-anchor="end" textLength="3.04" lengthAdjust="spacingAndGlyphs" stroke="#2e3436" stroke-width="0.1">2</text>
<text class="dm" x="376.60" y="269" font-size="5.100" fill="#2a2f31" textLength="3.04" lengthAdjust="spacingAndGlyphs" stroke="#2a2f31" stroke-width="0.1">#</text>
<text class="dm" x="375.20" y="275" font-size="5.100" fill="#2e3436" font-weight="700" text-anchor="end" textLength="3.04" lengthAdjust="spacingAndGlyphs" stroke="#2e3436" stroke-width="0.1">3</text>
<text class="dm" x="376.60" y="275" font-size="5.100" fill="#2a2f31" textLength="27.36" lengthAdjust="spacingAndGlyphs" stroke="#2a2f31" stroke-width="0.1"># Format:</text>
<text class="dm" x="375.20" y="281" font-size="5.100" fill="#2e3436" font-weight="700" text-anchor="end" textLength="3.04" lengthAdjust="spacingAndGlyphs" stroke="#2e3436" stroke-width="0.1">4</text>
<text class="dm" x="376.60" y="281" font-size="5.100" fill="#2a2f31" textLength="60.80" lengthAdjust="spacingAndGlyphs" stroke="#2a2f31" stroke-width="0.1"># &lt;pattern&gt; &lt;action&gt;</text>
<text class="dm" x="375.20" y="287" font-size="5.100" fill="#2e3436" font-weight="700" text-anchor="end" textLength="3.04" lengthAdjust="spacingAndGlyphs" stroke="#2e3436" stroke-width="0.1">5</text>
<text class="dm" x="376.60" y="287" font-size="5.100" fill="#2a2f31" textLength="3.04" lengthAdjust="spacingAndGlyphs" stroke="#2a2f31" stroke-width="0.1">#</text>
<text class="dm" x="375.20" y="294" font-size="5.100" fill="#2e3436" font-weight="700" text-anchor="end" textLength="3.04" lengthAdjust="spacingAndGlyphs" stroke="#2e3436" stroke-width="0.1">6</text>
<text class="dm" x="376.60" y="294" font-size="5.100" fill="#2a2f31" textLength="30.40" lengthAdjust="spacingAndGlyphs" stroke="#2a2f31" stroke-width="0.1"># Actions:</text>
<text class="dm" x="375.20" y="300" font-size="5.100" fill="#2e3436" font-weight="700" text-anchor="end" textLength="3.04" lengthAdjust="spacingAndGlyphs" stroke="#2e3436" stroke-width="0.1">7</text>
<text class="dm" x="376.60" y="300" font-size="5.100" fill="#2a2f31" textLength="179.36" lengthAdjust="spacingAndGlyphs" stroke="#2a2f31" stroke-width="0.1">#   permissions - copy when trying to preserve permissions.</text>
<text class="dm" x="375.20" y="306" font-size="5.100" fill="#2e3436" font-weight="700" text-anchor="end" textLength="3.04" lengthAdjust="spacingAndGlyphs" stroke="#2e3436" stroke-width="0.1">8</text>
<text class="dm" x="376.60" y="306" font-size="5.100" fill="#2a2f31" textLength="69.92" lengthAdjust="spacingAndGlyphs" stroke="#2a2f31" stroke-width="0.1">#   skip - do not copy.</text>
<text class="dm" x="375.20" y="312" font-size="5.100" fill="#2e3436" font-weight="700" text-anchor="end" textLength="3.04" lengthAdjust="spacingAndGlyphs" stroke="#2e3436" stroke-width="0.1">9</text>
<text class="dm" x="375.20" y="318" font-size="5.100" fill="#2e3436" font-weight="700" text-anchor="end" textLength="6.08" lengthAdjust="spacingAndGlyphs" stroke="#2e3436" stroke-width="0.1">10</text>
<text class="dm" x="376.60" y="318" font-size="5.100" fill="#2a2f31" textLength="45.60" lengthAdjust="spacingAndGlyphs" stroke="#2a2f31" stroke-width="0.1">system.nfs4_acl</text>
<text class="dm" x="498.20" y="318" font-size="5.100" fill="#2a2f31" textLength="33.44" lengthAdjust="spacingAndGlyphs" stroke="#2a2f31" stroke-width="0.1">permissions</text>
<text class="dm" x="375.20" y="324" font-size="5.100" fill="#2e3436" font-weight="700" text-anchor="end" textLength="6.08" lengthAdjust="spacingAndGlyphs" stroke="#2e3436" stroke-width="0.1">11</text>
<text class="dm" x="376.60" y="324" font-size="5.100" fill="#2a2f31" textLength="42.56" lengthAdjust="spacingAndGlyphs" stroke="#2a2f31" stroke-width="0.1">system.nfs4acl</text>
<text class="dm" x="473.88" y="324" font-size="5.100" fill="#2a2f31" textLength="33.44" lengthAdjust="spacingAndGlyphs" stroke="#2a2f31" stroke-width="0.1">permissions</text>
<text class="dm" x="375.20" y="330" font-size="5.100" fill="#2e3436" font-weight="700" text-anchor="end" textLength="6.08" lengthAdjust="spacingAndGlyphs" stroke="#2e3436" stroke-width="0.1">12</text>
<text class="dm" x="376.60" y="330" font-size="5.100" fill="#2a2f31" textLength="69.92" lengthAdjust="spacingAndGlyphs" stroke="#2a2f31" stroke-width="0.1">system.posix_acl_access</text>
<text class="dm" x="498.20" y="330" font-size="5.100" fill="#2a2f31" textLength="33.44" lengthAdjust="spacingAndGlyphs" stroke="#2a2f31" stroke-width="0.1">permissions</text>
<text class="dm" x="375.20" y="337" font-size="5.100" fill="#2e3436" font-weight="700" text-anchor="end" textLength="6.08" lengthAdjust="spacingAndGlyphs" stroke="#2e3436" stroke-width="0.1">13</text>
<text class="dm" x="376.60" y="337" font-size="5.100" fill="#2a2f31" textLength="72.96" lengthAdjust="spacingAndGlyphs" stroke="#2a2f31" stroke-width="0.1">system.posix_acl_default</text>
<text class="dm" x="473.88" y="337" font-size="5.100" fill="#2a2f31" textLength="33.44" lengthAdjust="spacingAndGlyphs" stroke="#2a2f31" stroke-width="0.1">permissions</text>
<text class="dm" x="375.20" y="343" font-size="5.100" fill="#2e3436" font-weight="700" text-anchor="end" textLength="6.08" lengthAdjust="spacingAndGlyphs" stroke="#2e3436" stroke-width="0.1">14</text>
<text class="dm" x="376.60" y="343" font-size="5.100" fill="#2a2f31" textLength="69.92" lengthAdjust="spacingAndGlyphs" stroke="#2a2f31" stroke-width="0.1">trusted.SGI_ACL_DEFAULT</text>
<text class="dm" x="498.20" y="343" font-size="5.100" fill="#2a2f31" textLength="12.16" lengthAdjust="spacingAndGlyphs" stroke="#2a2f31" stroke-width="0.1">skip</text>
<text class="dm" x="375.20" y="349" font-size="5.100" fill="#2e3436" font-weight="700" text-anchor="end" textLength="6.08" lengthAdjust="spacingAndGlyphs" stroke="#2e3436" stroke-width="0.1">15</text>
<text class="dm" x="376.60" y="349" font-size="5.100" fill="#2a2f31" textLength="60.80" lengthAdjust="spacingAndGlyphs" stroke="#2a2f31" stroke-width="0.1">trusted.SGI_ACL_FILE</text>
<text class="dm" x="473.88" y="349" font-size="5.100" fill="#2a2f31" textLength="12.16" lengthAdjust="spacingAndGlyphs" stroke="#2a2f31" stroke-width="0.1">skip</text>
<text class="dm" x="375.20" y="355" font-size="5.100" fill="#2e3436" font-weight="700" text-anchor="end" textLength="6.08" lengthAdjust="spacingAndGlyphs" stroke="#2e3436" stroke-width="0.1">16</text>
<text class="dm" x="376.60" y="355" font-size="5.100" fill="#2a2f31" textLength="60.80" lengthAdjust="spacingAndGlyphs" stroke="#2a2f31" stroke-width="0.1">trusted.SGI_CAP_FILE</text>
<text class="dm" x="473.88" y="355" font-size="5.100" fill="#2a2f31" textLength="12.16" lengthAdjust="spacingAndGlyphs" stroke="#2a2f31" stroke-width="0.1">skip</text>
<text class="dm" x="375.20" y="361" font-size="5.100" fill="#2e3436" font-weight="700" text-anchor="end" textLength="6.08" lengthAdjust="spacingAndGlyphs" stroke="#2e3436" stroke-width="0.1">17</text>
<text class="dm" x="376.60" y="361" font-size="5.100" fill="#2a2f31" textLength="51.68" lengthAdjust="spacingAndGlyphs" stroke="#2a2f31" stroke-width="0.1">trusted.SGI_DMI_*</text>
<text class="dm" x="473.88" y="361" font-size="5.100" fill="#2a2f31" textLength="12.16" lengthAdjust="spacingAndGlyphs" stroke="#2a2f31" stroke-width="0.1">skip</text>
<text class="dm" x="375.20" y="367" font-size="5.100" fill="#2e3436" font-weight="700" text-anchor="end" textLength="6.08" lengthAdjust="spacingAndGlyphs" stroke="#2e3436" stroke-width="0.1">18</text>
<text class="dm" x="376.60" y="367" font-size="5.100" fill="#2a2f31" textLength="60.80" lengthAdjust="spacingAndGlyphs" stroke="#2a2f31" stroke-width="0.1">trusted.SGI_MAC_FILE</text>
<text class="dm" x="473.88" y="367" font-size="5.100" fill="#2a2f31" textLength="12.16" lengthAdjust="spacingAndGlyphs" stroke="#2a2f31" stroke-width="0.1">skip</text>
<text class="dm" x="375.20" y="373" font-size="5.100" fill="#2e3436" font-weight="700" text-anchor="end" textLength="6.08" lengthAdjust="spacingAndGlyphs" stroke="#2e3436" stroke-width="0.1">19</text>
<text class="dm" x="376.60" y="373" font-size="5.100" fill="#2a2f31" textLength="27.36" lengthAdjust="spacingAndGlyphs" stroke="#2a2f31" stroke-width="0.1">xfsroot.*</text>
<text class="dm" x="473.88" y="373" font-size="5.100" fill="#2a2f31" textLength="12.16" lengthAdjust="spacingAndGlyphs" stroke="#2a2f31" stroke-width="0.1">skip</text>
<text class="dm" x="375.20" y="380" font-size="5.100" fill="#2e3436" font-weight="700" text-anchor="end" textLength="6.08" lengthAdjust="spacingAndGlyphs" stroke="#2e3436" stroke-width="0.1">20</text>
<text class="dm" x="376.60" y="380" font-size="5.100" fill="#2a2f31" textLength="39.52" lengthAdjust="spacingAndGlyphs" stroke="#2a2f31" stroke-width="0.1">user.Beagle.*</text>
<text class="dm" x="473.88" y="380" font-size="5.100" fill="#2a2f31" textLength="12.16" lengthAdjust="spacingAndGlyphs" stroke="#2a2f31" stroke-width="0.1">skip</text>
<text class="dm" x="375.20" y="386" font-size="5.100" fill="#2e3436" font-weight="700" text-anchor="end" textLength="6.08" lengthAdjust="spacingAndGlyphs" stroke="#2e3436" stroke-width="0.1">21</text>
<text class="dm" x="376.60" y="386" font-size="5.100" fill="#2a2f31" textLength="36.48" lengthAdjust="spacingAndGlyphs" stroke="#2a2f31" stroke-width="0.1">security.evm</text>
<text class="dm" x="473.88" y="386" font-size="5.100" fill="#2a2f31" textLength="12.16" lengthAdjust="spacingAndGlyphs" stroke="#2a2f31" stroke-width="0.1">skip</text>
<text class="dm" x="522.52" y="386" font-size="5.100" fill="#2a2f31" textLength="94.24" lengthAdjust="spacingAndGlyphs" stroke="#2a2f31" stroke-width="0.1"># may only be written by kernel</text>
<text class="ds" x="470.80" y="399" font-size="4.952" fill="#3d4245" stroke="#3d4245" stroke-width="0.1">Plain Text</text>
<text class="ds" x="506.00" y="399" font-size="4.833" fill="#3d4245" stroke="#3d4245" stroke-width="0.1">Tab Width: 8</text>
<text class="ds" x="564.80" y="399" font-size="4.922" fill="#3d4245" stroke="#3d4245" stroke-width="0.1">Ln 1, Col 1</text>
<text class="ds" x="620.80" y="399" font-size="4.530" fill="#3d4245" stroke="#3d4245" stroke-width="0.1">INS</text>
</svg>
<svg width="110" height="170" viewBox="505 240 110 170" style="left:505px;top:240px"><defs><linearGradient id="pb" x1="0" y1="0" x2="0" y2="1"><stop offset="0" stop-color="#f8f7f6"/><stop offset="1" stop-color="#eceae8"/></linearGradient><filter id="psh" x="-20%" y="-10%" width="140%" height="125%"><feGaussianBlur stdDeviation="1.300"/></filter></defs><rect x="512" y="248.200" width="89.500" height="150" rx="3" fill="#000" opacity=".32" filter="url(#psh)"/><path d="M515 247h83.500a3 3 0 0 1 3 3v0.800l2.600 2.400-2.600 2.400V394a3 3 0 0 1-3 3H515a3 3 0 0 1-3-3V250a3 3 0 0 1 3-3Z" fill="#f6f5f4" stroke="#bdb8b3" stroke-width=".5"/><rect x="516" y="250.500" width="80" height="11.500" rx="1.300" fill="url(#pb)" stroke="#cbc5bf" stroke-width=".5"/><path d="M542.700 250.500v11.500M569.300 250.500v11.500" stroke="#cbc5bf" stroke-width=".5"/><path d="M531.100 256.300a1.900 1.900 0 1 1-.6-1.400" fill="none" stroke="#33383a" stroke-width=".7"/><path d="M531.500 253.900v1.700h-1.700Z" fill="#33383a"/><path d="M554.400 254.200h3.200v1h-3.200ZM553.600 255.500h4.800v2.200h-4.800ZM554.600 257.300h2.800v1.300h-2.800Z" fill="#33383a"/><path d="M581.300 257.900l3.400-3.400" stroke="#33383a" stroke-width=".7"/><path d="M583 254h2.200v2.200ZM580.800 256.200v2.200h2.200Z" fill="#33383a"/><path d="M517.600 275.600h77M517.600 295.400h77M517.600 333.600h77M517.600 354h77M517.600 365.400h77" stroke="#d9d5d1" stroke-width=".5"/><path d="M591.400 338l1.600 1.400-1.600 1.400ZM591.400 346.600l1.600 1.400-1.600 1.400Z" fill="#33383a"/></svg>
<svg class="tx" xml:space="preserve" width="700" height="525" viewBox="0 0 700 525" style="left:0;top:0">
<text class="ds" x="518.00" y="272" font-size="4.905" fill="#33383a" stroke="#33383a" stroke-width="0.1">New Window</text>
<text class="ds" x="518.00" y="283" font-size="4.745" fill="#33383a" stroke="#33383a" stroke-width="0.1">Save As...</text>
<text class="ds" x="518.00" y="291" font-size="4.636" fill="#33383a" stroke="#33383a" stroke-width="0.1">Save All</text>
<text class="ds" x="518.00" y="302" font-size="4.530" fill="#33383a" stroke="#33383a" stroke-width="0.1">Find...</text>
<text class="ds" x="518.00" y="312" font-size="4.897" fill="#33383a" stroke="#33383a" stroke-width="0.1">Find and Replace...</text>
<text class="ds" x="518.00" y="321" font-size="4.834" fill="#a9abab" stroke="#a9abab" stroke-width="0.1">Clear Highlight</text>
<text class="ds" x="518.00" y="330" font-size="4.848" fill="#33383a" stroke="#33383a" stroke-width="0.1">Go to Line...</text>
<text class="ds" x="518.00" y="341" font-size="4.804" fill="#33383a" stroke="#33383a" stroke-width="0.1">View</text>
<text class="ds" x="518.00" y="350" font-size="4.871" fill="#33383a" stroke="#33383a" stroke-width="0.1">Tools</text>
<text class="ds" x="518.00" y="361" font-size="4.897" fill="#33383a" stroke="#33383a" stroke-width="0.1">Preferences</text>
<text class="ds" x="518.00" y="372" font-size="4.960" fill="#33383a" stroke="#33383a" stroke-width="0.1">Keyboard Shortcuts</text>
<text class="ds" x="518.00" y="381" font-size="4.737" fill="#33383a" stroke="#33383a" stroke-width="0.1">Help</text>
<text class="ds" x="518.00" y="390" font-size="4.968" fill="#33383a" stroke="#33383a" stroke-width="0.1">About Text Editor</text>
</svg>
<div style="left:0.00px;top:506.60px;width:700.00px;height:2.20px;background:linear-gradient(rgba(90,0,60,0),rgba(90,0,60,.22));"></div>
<div style="left:0.00px;top:508.60px;width:700.00px;height:16.40px;background:linear-gradient(90deg,#f2c6e0,#f6d3e5 30%,#f8d9e5 60%,#f8d9e4);"></div>
<div style="left:0.00px;top:508.60px;width:700.00px;height:2.40px;background:linear-gradient(#ffd4ec,rgba(255,212,236,0));"></div>
<div style="left:170.60px;top:509.80px;width:12.30px;height:14.20px;background:rgba(255,255,255,.55);border-radius:1.500px;"></div>
<svg width="200" height="17" viewBox="0 508 200 17" style="left:0;top:508px"><defs><linearGradient id="w11" x1="0" y1="0" x2="1" y2="1"><stop offset="0" stop-color="#4cc2f5"/><stop offset="1" stop-color="#0b6fd0"/></linearGradient><linearGradient id="edg" x1="0" y1="0" x2="1" y2="1"><stop offset="0" stop-color="#35c1b0"/><stop offset=".5" stop-color="#1b9de2"/><stop offset="1" stop-color="#0f5aa8"/></linearGradient><linearGradient id="fy" x1="0" y1="0" x2="0" y2="1"><stop offset="0" stop-color="#ffd85e"/><stop offset="1" stop-color="#f0b429"/></linearGradient></defs><g fill="url(#w11)"><rect x="7.400" y="513" width="3.800" height="3.800" rx=".3"/><rect x="11.600" y="513" width="3.800" height="3.800" rx=".3"/><rect x="7.400" y="517.200" width="3.800" height="3.800" rx=".3"/><rect x="11.600" y="517.200" width="3.800" height="3.800" rx=".3"/></g><circle cx="27.200" cy="516.200" r="2.700" fill="none" stroke="#2b2b2b" stroke-width=".9"/><path d="M25.200 518.300l-2.200 2.400" stroke="#2b2b2b" stroke-width="1" stroke-linecap="round"/><rect x="39.400" y="513.400" width="5.400" height="5.400" rx=".6" fill="#f2f2f2" stroke="#cfcfcf" stroke-width=".3"/><rect x="37.200" y="515.400" width="5.600" height="5.600" rx=".6" fill="#2d2d2d"/><rect x="52.300" y="513" width="8.200" height="8.200" rx="1" fill="#1f7fdc"/><rect x="53.200" y="513.900" width="2.900" height="6.400" rx=".4" fill="#e9f4ff"/><rect x="56.800" y="513.900" width="2.900" height="3.600" rx=".4" fill="#9fd0ff"/><rect x="56.800" y="518.100" width="2.900" height="2.200" rx=".4" fill="#5eb0f5"/><circle cx="71.400" cy="516.900" r="3.900" fill="#6264d6"/><path d="M68.300 519.300l-.8 2.200 2.600-.9Z" fill="#6264d6"/><rect x="69.100" y="515.300" width="3.300" height="3.200" rx=".6" fill="#fff"/><path d="M72.600 516.600l1.500-1v2.600l-1.500-1Z" fill="#fff"/><g transform="translate(86.600 516.800)"><g fill="#5c7a94"><rect x="-1" y="-4.300" width="2" height="8.600" rx=".5" transform="rotate(0)"/><rect x="-1" y="-4.300" width="2" height="8.600" rx=".5" transform="rotate(45)"/><rect x="-1" y="-4.300" width="2" height="8.600" rx=".5" transform="rotate(90)"/><rect x="-1" y="-4.300" width="2" height="8.600" rx=".5" transform="rotate(135)"/><circle r="3.200"/></g><circle r="2.200" fill="#9cc3e6"/><circle r="1.100" fill="#33546e"/></g><rect x="85.900" y="523.300" width="1.400" height=".8" rx=".4" fill="#7a6570"/><path d="M97.600 514.200c0-.5.300-.8.800-.8h2.400l.9.900h3.500c.5 0 .8.300.8.800v5c0 .5-.3.800-.8.800h-6.800c-.5 0-.8-.3-.8-.8Z" fill="#e5a51f"/><path d="M97.600 515.700h8.400v4.400c0 .5-.3.800-.8.800h-6.800c-.5 0-.8-.3-.8-.8Z" fill="url(#fy)"/><rect x="98.600" y="518.300" width="6.400" height="2.600" rx=".4" fill="#2f86d8"/><rect x="101.100" y="523.300" width="1.400" height=".8" rx=".4" fill="#7a6570"/><path d="M112.600 514.200c0-.5.300-.8.800-.8h2.400l.9.900h3.500c.5 0 .8.300.8.800v5c0 .5-.3.800-.8.800h-6.800c-.5 0-.8-.3-.8-.8Z" fill="#e5a51f"/><path d="M112.600 515.700h8.400v4.400c0 .5-.3.800-.8.800h-6.800c-.5 0-.8-.3-.8-.8Z" fill="url(#fy)"/><path d="M113.600 519.200h6.400v1c0 .4-.3.700-.7.700h-5c-.4 0-.7-.3-.7-.7Z" fill="#3b8fdd"/><circle cx="131.600" cy="516.900" r="4" fill="url(#edg)"/><path d="M129.600 518.200a2.300 2.300 0 0 1 4.400-1.300c-1.500-.6-3.200-.1-3.200 1.500 0 1 .8 1.800 2 2-1.500.4-3-.5-3.200-2.200Z" fill="#e9fbff" opacity=".9"/><rect x="142.500" y="514.400" width="8.200" height="6.800" rx="1.100" fill="#1f5fa8"/><path d="M144.700 514.600v-.6c0-.6.400-1 1-1h1.800c.6 0 1 .4 1 1v.6" fill="none" stroke="#1f5fa8" stroke-width=".7"/><rect x="144.900" y="516" width="1.500" height="1.500" fill="#f35325"/><rect x="146.800" y="516" width="1.500" height="1.500" fill="#81bc06"/><rect x="144.900" y="517.900" width="1.500" height="1.500" fill="#05a6f0"/><rect x="146.800" y="517.900" width="1.500" height="1.500" fill="#ffba08"/><rect x="157.400" y="513.300" width="8.200" height="6.800" rx=".8" fill="#2a2a2e"/><rect x="157.400" y="513.300" width="8.200" height="1.500" rx=".7" fill="#6d6f78"/><path d="M159 516.300l1.300 1-1.300 1" fill="none" stroke="#fff" stroke-width=".55"/><path d="M161.200 518.600h2" stroke="#fff" stroke-width=".5"/><path d="M159.400 520.800h4.200l.6.900h-5.400Z" fill="#5a5c64"/><rect x="160.900" y="523.300" width="1.400" height=".8" rx=".4" fill="#7a6570"/><rect x="174.300" y="523.200" width="4.800" height=".9" rx=".45" fill="#6a5a62"/></svg>
<svg width="8.00" height="9.20" viewBox="0 0 20 23" style="left:172.70px;top:512.30px"><path d="M10 1c-2.200 0-3.400 1.800-3.400 4 0 2-1.200 3.600-2.600 6.200C2.600 14 2.400 17 3.400 19.500h13.200c1-2.500.8-5.500-.6-8.300C14.600 8.600 13.400 7 13.400 5c0-2.200-1.200-4-3.400-4Z" fill="#1c1c1c"/><path d="M10 7.500c-1.600 0-2.600 2.600-3.400 5.200-.7 2.400-.5 4.700.4 6.300h6c.9-1.600 1.100-3.900.4-6.300C12.600 10.100 11.600 7.500 10 7.500Z" fill="#f4f4f4"/><path d="M8.200 5.800l1.800 1.400 1.800-1.400-1.800-.8Z" fill="#f5a623"/><path d="M2 19.500c0-1.400 1.400-2.400 3.200-2 1.600.4 2.600 1.600 2.600 2.800C7.800 21.600 6 22 4.400 22 2.800 22 2 20.900 2 19.500ZM18 19.500c0-1.400-1.400-2.400-3.200-2-1.600.4-2.600 1.600-2.600 2.800 0 1.300 1.800 1.700 3.400 1.700 1.600 0 2.400-1.100 2.400-2.500Z" fill="#f5a623"/></svg>
<svg width="80" height="17" viewBox="620 508 80 17" style="left:620px;top:508px" fill="none" stroke="#3a3a3a" stroke-width=".6" stroke-linecap="round" stroke-linejoin="round"><path d="M627.500 517.700l2.200-2.200 2.200 2.200" stroke-width=".75"/><path d="M638.800 518.700h3.600a1.200 1.200 0 0 0 .2-2.400 1.900 1.900 0 0 0-3.600-.4 1.400 1.400 0 0 0-.2 2.800Z" stroke-width=".75"/><path d="M638.600 516.600h4" stroke-width=".45"/><rect x="648.400" y="514.400" width="4.800" height="3.600" rx=".5"/><path d="M649.800 519.400h2M653.800 514l.9-.9" /><path d="M657.400 516.200v1.600h.9l1.200 1v-3.600l-1.200 1ZM660.600 515.800a1.700 1.700 0 0 1 0 2.400" stroke-width=".5"/><circle cx="690.300" cy="516.900" r="2.800" fill="#2a8496" stroke="none"/></svg>
<svg class="tx" xml:space="preserve" width="700" height="525" viewBox="0 0 700 525" style="left:0;top:0">
<text class="s" x="685.00" y="515" font-size="4.039" fill="#2a2a2a" text-anchor="end" textLength="13.80" lengthAdjust="spacingAndGlyphs" stroke="#2a2a2a" stroke-width="0.1">2:42 PM</text>
<text class="s" x="685.00" y="520" font-size="4.067" fill="#2a2a2a" text-anchor="end" textLength="16.60" lengthAdjust="spacingAndGlyphs" stroke="#2a2a2a" stroke-width="0.1">9/21/2021</text>
<text class="s" x="690.30" y="518" font-size="3.400" fill="#fff" text-anchor="middle">4</text>
</svg>
</div>
</body></html>
